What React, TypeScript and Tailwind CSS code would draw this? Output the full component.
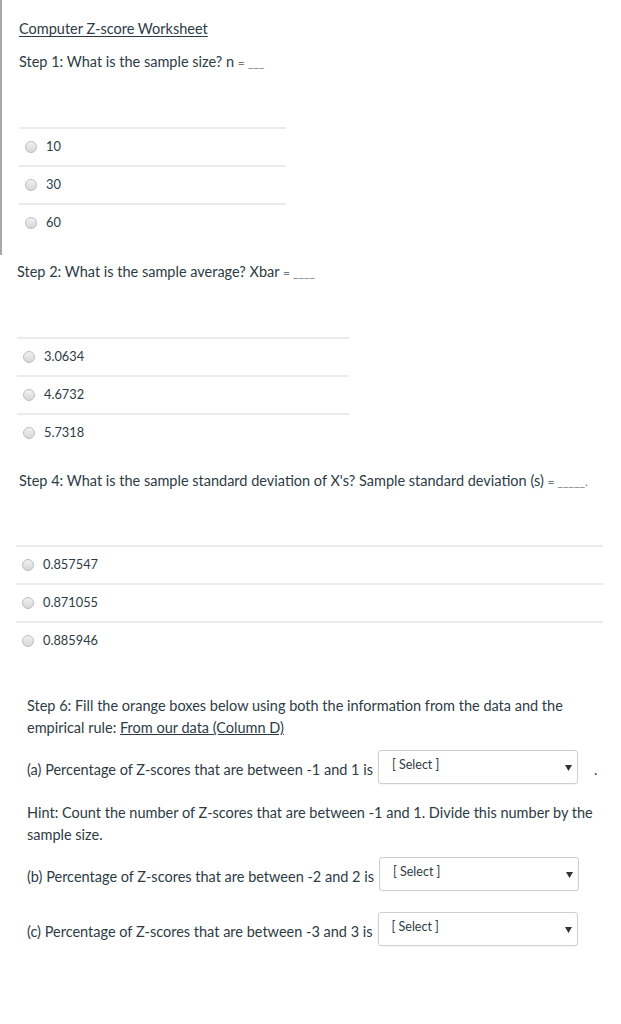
const text = "text-[#2d3b45]";

function Radio({ label }: { label: string }) {
  return (
    <div className="flex h-[38px] items-center border-t-2 border-[#ebebeb] pb-[1px] pl-[6px]">
      <span className="h-[12px] w-[12px] shrink-0 rounded-full border border-[#bdbdbd] bg-gradient-to-b from-[#f2f2f2] to-[#d6d6d6]" />
      <span className={`ml-[9px] text-[12.8px] ${text}`}>{label}</span>
    </div>
  );
}

function Question({
  prompt,
  blank,
  options,
  className,
  listClass,
}: {
  prompt: string;
  blank: string;
  options: string[];
  className: string;
  listClass: string;
}) {
  return (
    <div className={className}>
      <p className={`text-[14.5px] leading-[20px] ${text}`}>
        {prompt} <span className="text-[12px] text-[#6b7780]">{blank}</span>
      </p>
      <div className={listClass}>
        {options.map((o) => (
          <Radio key={o} label={o} />
        ))}
      </div>
    </div>
  );
}

function Select() {
  return (
    <div className="relative h-[34px] w-[200px] shrink-0 rounded-[3px] border border-[#cfcfcf] bg-white shadow-[0_1px_1px_rgba(0,0,0,0.04)]">
      <span className={`absolute left-[13px] top-[5px] text-[12.5px] ${text}`}>[ Select ]</span>
      <svg className="absolute right-[5px] top-[14px]" width="7" height="6" viewBox="0 0 7 6">
        <path d="M0 0h7L3.5 6z" fill="#333" />
      </svg>
    </div>
  );
}

function SelectRow({ label, dot, className }: { label: string; dot?: boolean; className: string }) {
  return (
    <div className={`flex items-end ${className}`}>
      <span className={`pb-[4px] pr-[5px] text-[14.5px] leading-[20px] ${text}`}>{label}</span>
      <Select />
      {dot && <span className={`ml-[16px] pb-[4px] text-[14.5px] leading-[20px] ${text}`}>.</span>}
    </div>
  );
}

export default function App() {
  return (
    <div className="min-h-[1024px] w-[621px] bg-white" style={{ fontFamily: "Lato, 'Open Sans', sans-serif" }}>
      <div className="h-[255px] border-l-2 border-[#a9a9a9] pl-[17px] pt-[19px]">
        <h1 className={`text-[14.5px] leading-[20px] underline underline-offset-2 ${text}`}>
          Computer Z-score Worksheet
        </h1>
        <Question
          className="mt-[13px] w-[267px]"
          listClass="mt-[54px]"
          prompt="Step 1: What is the sample size? n"
          blank="= ___"
          options={["10", "30", "60"]}
        />
      </div>

      <Question
        className="ml-[17px] mt-[7px] w-[332px]"
        listClass="mt-[54px]"
        prompt="Step 2: What is the sample average? Xbar"
        blank="= ____"
        options={["3.0634", "4.6732", "5.7318"]}
      />

      <Question
        className="ml-[16px] mt-[20px] w-[587px] [&>p]:pl-[3px]"
        listClass="mt-[53px]"
        prompt="Step 4: What is the sample standard deviation of X's? Sample standard deviation (s)"
        blank="= _____."
        options={["0.857547", "0.871055", "0.885946"]}
      />

      <div className="pl-[27px] pr-[20px]">
        <p className={`mt-[36px] text-[14.5px] leading-[22px] ${text}`}>
          Step 6: Fill the orange boxes below using both the information from the data and the
          empirical rule: <span className="underline underline-offset-1">From our data (Column D)</span>
        </p>
        <SelectRow className="mt-[11px]" label="(a) Percentage of Z-scores that are between -1 and 1  is" dot />
        <p className={`mt-[18px] text-[14.5px] leading-[22px] ${text}`}>
          Hint: Count the number of Z-scores that are between -1 and 1. Divide this number by the
          sample size.
        </p>
        <SelectRow className="mt-[11px]" label="(b) Percentage of Z-scores that are between -2 and 2  is" />
        <SelectRow className="mt-[21px]" label="(c) Percentage of Z-scores that are between -3 and 3  is" />
      </div>
    </div>
  );
}
